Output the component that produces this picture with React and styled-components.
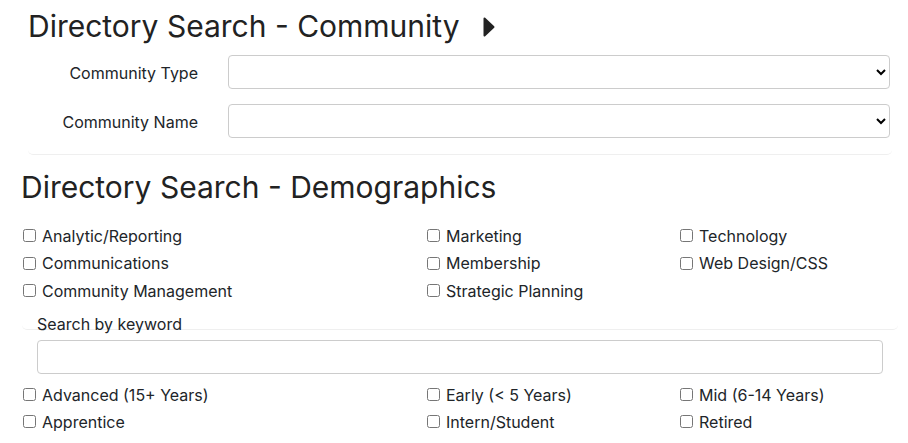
import React from 'react'
import styled, { createGlobalStyle } from 'styled-components'

const GlobalStyle = createGlobalStyle`
	body {
		margin: 0;
		background: #fff;
		font-family: Inter, 'Noto Sans', sans-serif;
		color: #212529;
	}
`

const TopEdge = styled.div`
	height: 0;
	box-shadow: 0 0 4px rgba(0, 0, 0, 0.09);
`

const CommunityCard = styled.section`
	margin: 0 16px 0 28px;
	padding: 8px 2px 16px 0;
	border-bottom: 1px solid #efefef;
	border-radius: 0 0 5px 5px;
`

const Title = styled.h1`
	display: flex;
	align-items: center;
	gap: 23px;
	margin: 0;
	margin-left: ${props => props.indent || 0}px;
	font-size: 30px;
	font-weight: 400;
	line-height: 36px;
	color: #222;
`

const Form = styled.div`
	display: flex;
	flex-direction: column;
	gap: 15px;
	margin-top: 11px;
`

const FormRow = styled.div`
	display: grid;
	grid-template-columns: 170px 1fr;
	gap: 30px;
	align-items: center;
`

const Label = styled.label`
	text-align: right;
	font-size: 16px;
	line-height: 24px;
	padding-top: 2px;
	color: #212529;
`

const Select = styled.select`
	height: 34px;
	width: 100%;
	border: 1px solid #ccc;
	border-radius: 4px;
	background: #fff;
	font-family: inherit;
	font-size: 16px;
`

const CheckCard = styled.div`
	margin: 17px 10px 0 22px;
	padding: 0 0 24px 1px;
	border-bottom: 1px solid #efefef;
	border-radius: 0 0 5px 5px;
`

const CheckGrid = styled.div`
	display: grid;
	grid-template-columns: 404px 253px 1fr;
	grid-auto-rows: ${props => props.row}px;
	margin-left: ${props => props.indent || 0}px;
	margin-top: ${props => props.top || 0}px;
`

const CheckItem = styled.label`
	display: flex;
	align-items: center;
	font-size: 16px;
	color: #212529;
	white-space: nowrap;

	input {
		width: 13px;
		height: 13px;
		margin: 0 6px 0 0;
	}
`

const KeywordBlock = styled.div`
	margin: 0 10px 0 22px;
	padding: 0 15px;
`

const KeywordLabel = styled.div`
	margin-top: -18px;
	font-size: 16px;
	line-height: 24px;
`

const TextInput = styled.input`
	display: block;
	box-sizing: border-box;
	width: 100%;
	height: 34px;
	margin-top: 4px;
	border: 1px solid #ccc;
	border-radius: 4px;
	font-family: inherit;
	font-size: 16px;
`

function Caret() {
	return (
		<svg width='12' height='20' viewBox='0 0 12 20' style={{ marginTop: 2 }}>
			<path d='M1.5 1.5 L10.5 10 L1.5 18.5 Z' fill='#222' stroke='#222' strokeWidth='2' strokeLinejoin='round' />
		</svg>
	)
}

const areas = [
	'Analytic/Reporting', 'Marketing', 'Technology',
	'Communications', 'Membership', 'Web Design/CSS',
	'Community Management', 'Strategic Planning',
]

const levels = [
	'Advanced (15+ Years)', 'Early (< 5 Years)', 'Mid (6-14 Years)',
	'Apprentice', 'Intern/Student', 'Retired',
]

export default function App() {
	return (
		<>
			<GlobalStyle />
			<TopEdge />
			<CommunityCard>
				<Title>
					Directory Search - Community
					<Caret />
				</Title>
				<Form>
					<FormRow>
						<Label>Community Type</Label>
						<Select><option></option></Select>
					</FormRow>
					<FormRow>
						<Label>Community Name</Label>
						<Select><option></option></Select>
					</FormRow>
				</Form>
			</CommunityCard>
			<Title as='h2' indent={21} style={{ marginTop: 14 }}>
				Directory Search - Demographics
			</Title>
			<CheckCard>
				<CheckGrid row={27.5}>
					{areas.map(a => (
						<CheckItem key={a}>
							<input type='checkbox' />
							{a}
						</CheckItem>
					))}
				</CheckGrid>
			</CheckCard>
			<KeywordBlock>
				<KeywordLabel>Search by keyword</KeywordLabel>
				<TextInput type='text' />
			</KeywordBlock>
			<CheckGrid row={27} indent={23} top={7.5}>
				{levels.map(l => (
					<CheckItem key={l}>
						<input type='checkbox' />
						{l}
					</CheckItem>
				))}
			</CheckGrid>
		</>
	)
}
